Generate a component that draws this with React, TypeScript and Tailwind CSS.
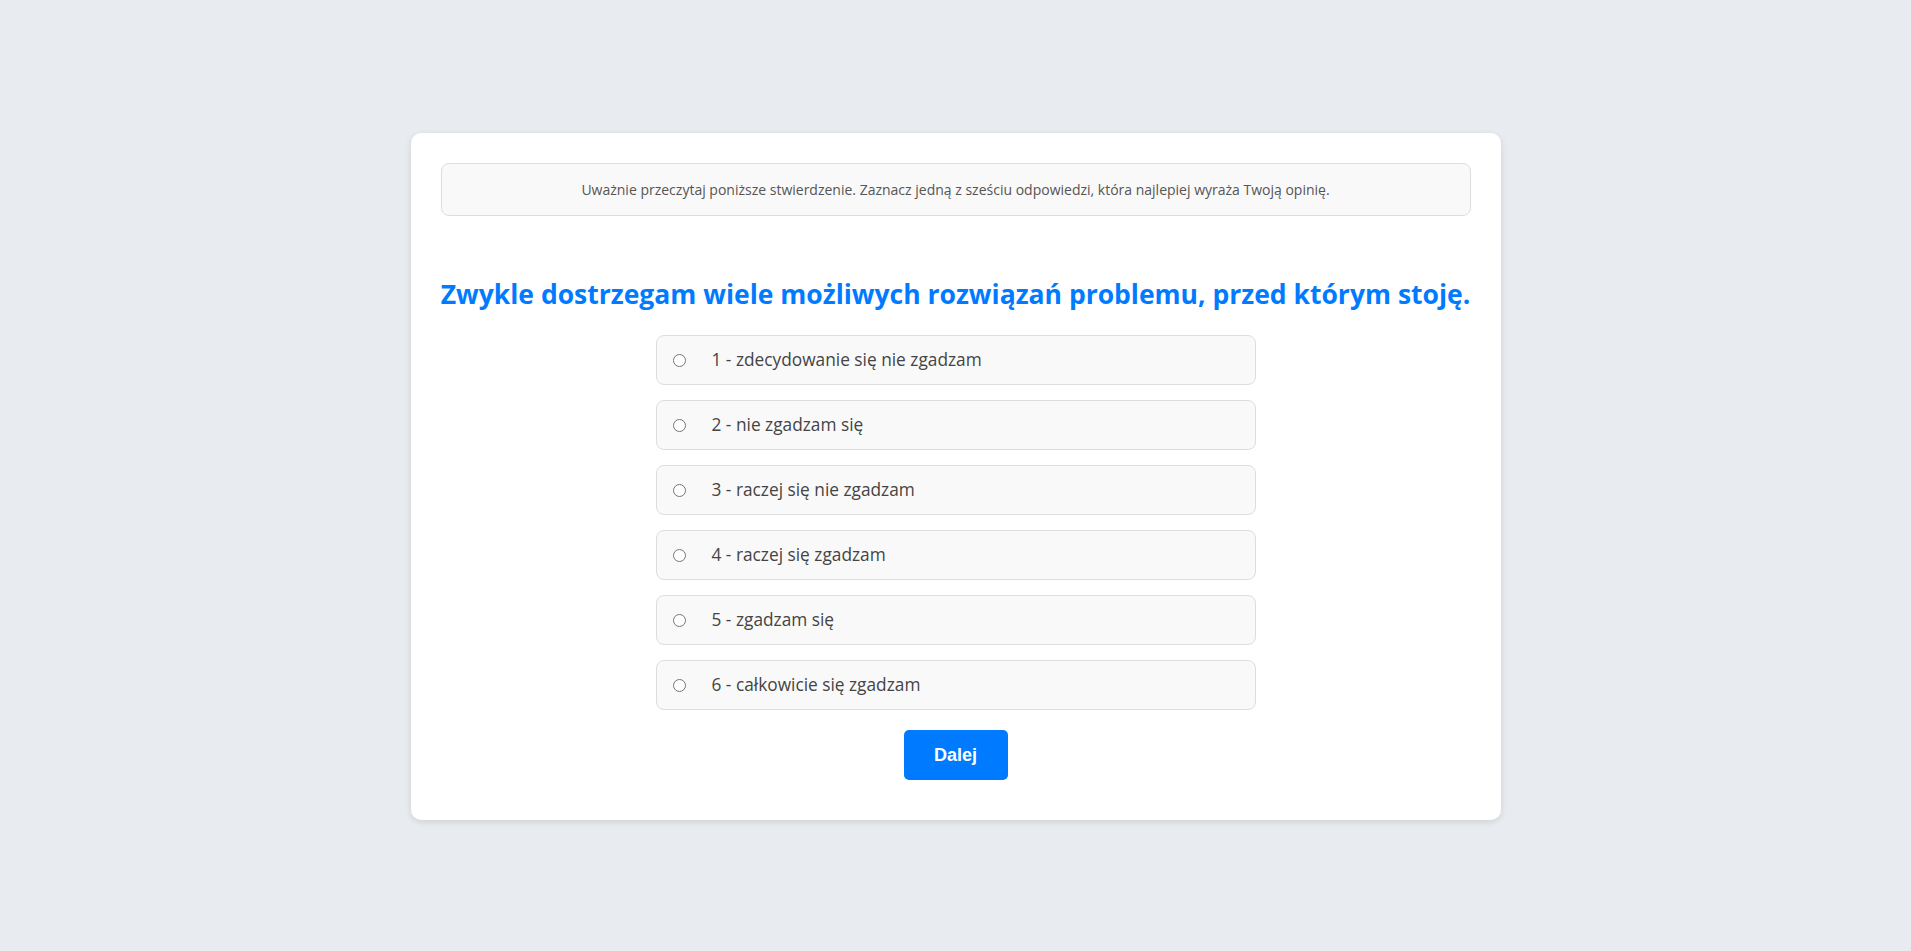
import { useState } from 'react';

const options = [
  '1 - zdecydowanie się nie zgadzam',
  '2 - nie zgadzam się',
  '3 - raczej się nie zgadzam',
  '4 - raczej się zgadzam',
  '5 - zgadzam się',
  '6 - całkowicie się zgadzam',
];

export default function App() {
  const [selected, setSelected] = useState<number | null>(null);

  return (
    <div className="min-h-screen bg-[#e8ecf0] flex items-center justify-center pt-[2px] font-['Open_Sans',sans-serif]">
      <div className="w-[1090px] bg-white rounded-[10px] shadow-[0_2px_6px_rgba(0,0,0,0.12)] p-[30px] pb-[40px]">
        {/* Instructions */}
        <div className="h-[53px] flex items-center justify-center bg-[#f9f9f9] border border-[#dddddd] rounded-lg text-[14px] text-[#555555]">
          Uważnie przeczytaj poniższe stwierdzenie. Zaznacz jedną z sześciu odpowiedzi, która najlepiej wyraża Twoją opinię.
        </div>

        {/* Statement */}
        <h2 className="mt-[61px] h-[34px] leading-[34px] text-center text-[26.5px] font-bold text-[#007bff] whitespace-nowrap">
          Zwykle dostrzegam wiele możliwych rozwiązań problemu, przed którym stoję.
        </h2>

        {/* Answers */}
        <div className="mt-[24px] w-[600px] mx-auto flex flex-col gap-[15px]">
          {options.map((label, idx) => (
            <label
              key={idx}
              className="h-[50px] flex items-center pl-[16px] bg-[#f9f9f9] border border-[#dddddd] rounded-lg cursor-pointer"
              onClick={() => setSelected(idx)}
            >
              <span className="w-[13px] h-[13px] rounded-full border border-[#767676] bg-white flex items-center justify-center flex-shrink-0">
                {selected === idx && <span className="w-[7px] h-[7px] rounded-full bg-[#007bff]" />}
              </span>
              <span className="ml-[26px] text-[17.3px] text-[#444444]">{label}</span>
            </label>
          ))}
        </div>

        <div className="mt-[20px] flex justify-center">
          <button className="w-[104px] h-[50px] rounded-[5px] bg-[#007bff] text-white text-[18px] font-bold font-['Liberation_Sans',Arial,sans-serif]">
            Dalej
          </button>
        </div>
      </div>
    </div>
  );
}
